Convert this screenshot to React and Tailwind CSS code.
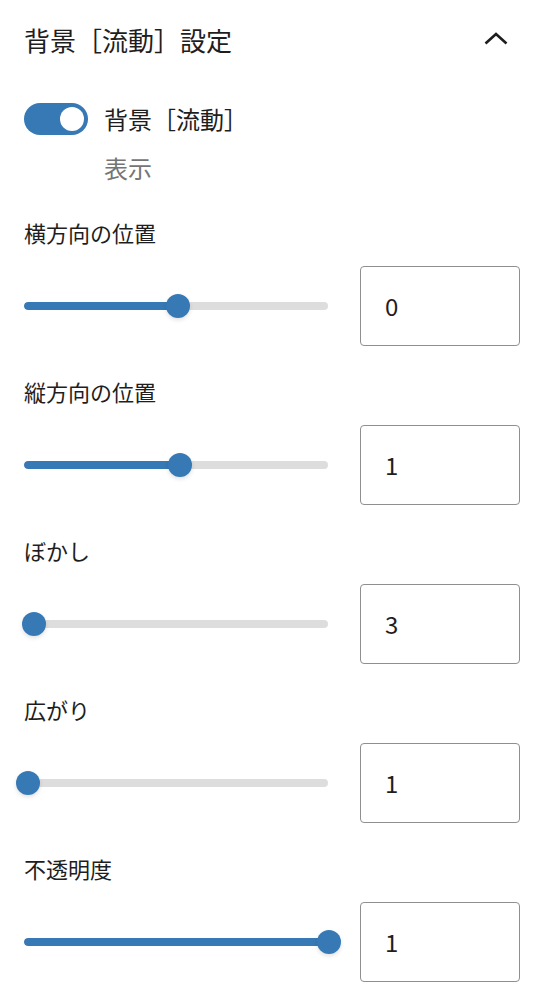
import React from "react";

const FONT = { fontFamily: '"Noto Sans CJK JP", "Noto Sans", sans-serif' };

const sliders = [
  { label: "横方向の位置", value: "0", pos: 153.5 },
  { label: "縦方向の位置", value: "1", pos: 156 },
  { label: "ぼかし", value: "3", pos: 10 },
  { label: "広がり", value: "1", pos: 4 },
  { label: "不透明度", value: "1", pos: 305 },
];

function Slider({ pos }) {
  return (
    <div className="relative w-[304px] h-[24px] flex items-center">
      <div className="w-full h-[8px] rounded-full bg-[#dddddd] overflow-hidden">
        <div className="h-full bg-[#3779b5] rounded-full" style={{ width: pos }} />
      </div>
      <div
        className="absolute top-0 w-[24px] h-[24px] rounded-full bg-[#3779b5] shadow-[0_2px_4px_rgba(0,0,0,0.12)]"
        style={{ left: pos - 12 }}
      />
    </div>
  );
}

export default function App() {
  return (
    <div className="w-[540px] h-[1000px] bg-white pl-6 pr-5 text-[#1e1e1e]" style={FONT}>
      <div className="h-[80px] flex items-center justify-between">
        <div className="text-[26px] leading-[32px] tracking-normal">背景［流動］設定</div>
        <svg width="24" height="24" viewBox="0 0 24 24" className="mr-[12px] -mt-[2px]">
          <path d="M1.5 16.5 L12 7 L22.5 16.5" fill="none" stroke="#1e1e1e" strokeWidth="2.6" />
        </svg>
      </div>

      <div className="mt-[23px] flex items-center">
        <div className="w-[64px] h-[32px] rounded-full bg-[#3779b5] flex items-center justify-end pr-[4px]">
          <div className="w-[24px] h-[24px] rounded-full bg-white" />
        </div>
        <div className="ml-4 text-[24px] leading-[32px]">背景［流動］</div>
      </div>
      <div className="mt-[17px] pl-[80px] text-[24px] leading-[32px] text-[#757575]">表示</div>

      <div className="mt-[33px] flex flex-col gap-[30px]">
        {sliders.map((s, i) => (
          <div key={i} className="flex flex-col">
            <div className="text-[22px] leading-[30px]">{s.label}</div>
            <div className="mt-[19px] h-[80px] flex items-center justify-between">
              <Slider pos={s.pos} />
              <div className="w-[160px] h-[80px] border-[1.5px] border-[#8f8f8f] rounded-[4px] flex items-center pl-6 text-[24px]">
                {s.value}
              </div>
            </div>
          </div>
        ))}
      </div>
    </div>
  );
}
